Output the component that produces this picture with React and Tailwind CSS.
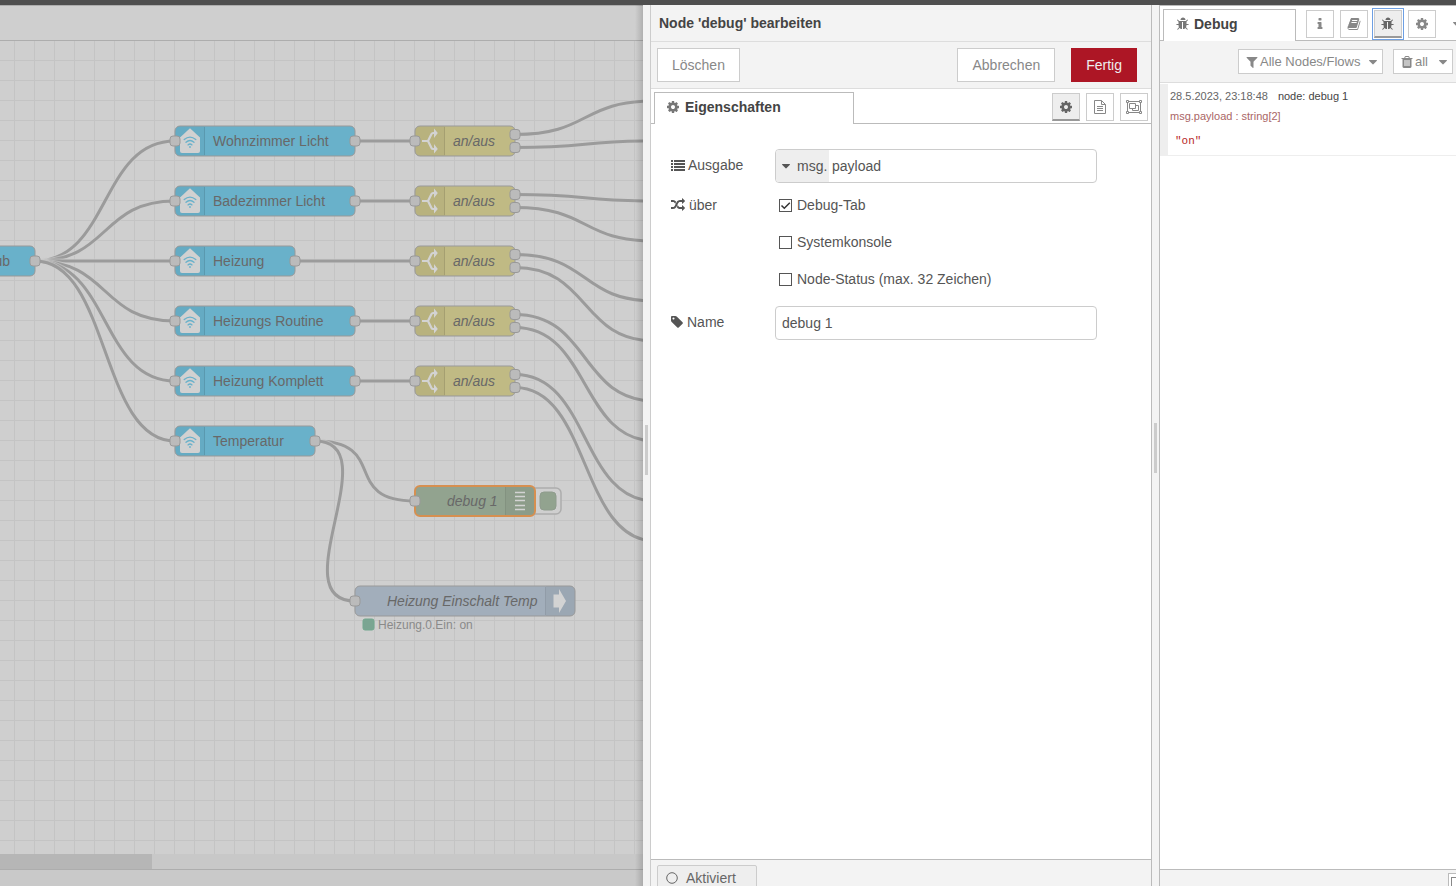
import React from 'react';

const ICONS = {
  cog: 'M1152 896q0-106-75-181t-181-75-181 75-75 181 75 181 181 75 181-75 75-181zm512-109v222q0 12-8 23t-20 13l-185 28q-19 54-39 91 35 50 107 138 10 12 10 25t-9 23q-27 37-99 108t-94 71q-12 0-26-9l-138-108q-44 23-91 38-16 136-29 186-7 28-36 28h-222q-14 0-24.5-8.5t-11.5-21.5l-28-184q-49-16-90-37l-141 107q-10 9-25 9-14 0-25-11-126-114-165-168-7-10-7-23 0-12 8-23 15-21 51-66.5t54-70.5q-27-50-41-99l-183-27q-13-2-21-12.5t-8-23.5v-222q0-12 8-23t19-13l186-28q14-46 39-92-40-57-107-138-10-12-10-24 0-10 9-23 26-36 98.500-107.500t94.500-71.500q13 0 26 10l138 107q44-23 91-38 16-136 29-186 7-28 36-28h222q14 0 24.500 8.500t11.500 21.500l28 184q49 16 90 37l142-107q9-9 24-9 13 0 25 10 129 119 165 170 7 8 7 22 0 12-8 23-15 21-51 66.500t-54 70.500q26 50 41 98l183 28q13 2 21 12.500t8 23.500z',
  bug: 'M1632 960q0 26-19 45t-45 19h-224q0 171-67 290l208 209q19 19 19 45t-19 45q-18 19-45 19t-45-19l-198-197q-5 5-15 13t-42 28.500-65 36.500-82 29-97 13v-896h-128v896q-51 0-101.500-13.500t-87-33-66-39-43.500-32.500l-15-14-183 207q-20 21-48 21-24 0-43-16-19-18-20.500-44.500t15.500-46.500l202-227q-58-114-58-274h-224q-26 0-45-19t-19-45 19-45 45-19h224v-294l-173-173q-19-19-19-45t19-45 45-19 45 19l173 173h844l173-173q19-19 45-19t45 19 19 45-19 45l-173 173v294h224q26 0 45 19t19 45zm-416-576h-640q0-133 93.500-226.500t226.500-93.500 226.500 93.500 93.500 226.500z',
  info: 'M1216 1344v128q0 26-19 45t-45 19h-512q-26 0-45-19t-19-45v-128q0-26 19-45t45-19h64v-384h-64q-26 0-45-19t-19-45v-128q0-26 19-45t45-19h384q26 0 45 19t19 45v576h64q26 0 45 19t19 45zm-128-1152v192q0 26-19 45t-45 19h-256q-26 0-45-19t-19-45v-192q0-26 19-45t45-19h256q26 0 45 19t19 45z',
  book: 'M1703 478q40 57 18 129l-275 906q-19 64-76.500 107.500t-122.500 43.500h-923q-77 0-148.500-53.500t-99.500-131.500q-24-67-2-127 0-4 3-27t4-37q1-8-3-21.500t-3-19.500q2-11 8-21t16.500-23.500 16.500-23.500q23-38 45-91.500t30-91.500q3-10 .5-30t-.5-28q3-11 17-28t17-23q21-36 42-92t25-90q1-9-2.500-32t.5-28q4-13 22-30.500t22-22.500q19-26 42.500-84.500t27.500-96.500q1-8-3-25.500t-2-26.500q2-8 9-18t18-23 17-21q8-12 16.500-30.500t15-35 16-36 19.500-32 26.500-23.500 36-11.500 47.500 5.500l-1 3q38-9 51-9h761q74 0 114 56t18 130l-274 906q-36 119-71.500 153.500t-128.500 34.500h-869q-27 0-38 15-11 16-1 43 24 70 144 70h923q29 0 56-15.500t35-41.500l300-987q7-22 5-57 38 15 59 43zm-1064 2q-4 13 2 22.500t20 9.500h608q13 0 25.500-9.500t16.500-22.500l21-64q4-13-2-22.500t-20-9.500h-608q-13 0-25.500 9.500t-16.500 22.500zm-83 256q-4 13 2 22.500t20 9.500h608q13 0 25.500-9.500t16.500-22.500l21-64q4-13-2-22.500t-20-9.500h-608q-13 0-25.500 9.500t-16.500 22.500z',
  filter: 'M1595 295q17 41-14 70l-493 493v742q0 42-39 59-13 5-25 5-27 0-45-19l-256-256q-19-19-19-45v-486l-493-493q-31-29-14-70 17-39 59-39h1280q42 0 59 39z',
  trash: 'M704 1376v-704q0-14-9-23t-23-9h-64q-14 0-23 9t-9 23v704q0 14 9 23t23 9h64q14 0 23-9t9-23zm256 0v-704q0-14-9-23t-23-9h-64q-14 0-23 9t-9 23v704q0 14 9 23t23 9h64q14 0 23-9t9-23zm256 0v-704q0-14-9-23t-23-9h-64q-14 0-23 9t-9 23v704q0 14 9 23t23 9h64q14 0 23-9t9-23zm-544-992h448l-48-117q-7-9-17-11h-317q-10 2-17 11zm928 32v64q0 14-9 23t-23 9h-96v948q0 83-47 143.500t-113 60.500h-832q-66 0-113-58.500t-47-141.500v-952h-96q-14 0-23-9t-9-23v-64q0-14 9-23t23-9h309l70-167q15-37 54-63t79-26h320q40 0 79 26t54 63l70 167h309q14 0 23 9t9 23z',
  caret: 'M1408 704q0 26-19 45l-448 448q-19 19-45 19t-45-19l-448-448q-19-19-19-45t19-45 45-19h896q26 0 45 19t19 45z',
  list: 'M0 256h256v256H0zM0 640h256v256H0zM0 1024h256v256H0zM0 1408h256v256H0zM384 256h1408v256H384zM384 640h1408v256H384zM384 1024h1408v256H384zM384 1408h1408v256H384z',
  random: 'M666 481q-60 92-137 273-22-45-37-72.500t-40.500-63.500-51-56.500-63-35-81.500-14.500h-224q-14 0-23-9t-9-23v-192q0-14 9-23t23-9h224q250 0 410 225zm1126 799q0 14-9 23l-320 320q-9 9-23 9-13 0-22.500-9.500t-9.500-22.500v-192q-32 0-85 .5t-81 1-73-1-71-5-64-10.500-63-18.500-58-28.500-59-40-55-53.500-56-69.500q59-93 136-273 22 45 37 72.500t40.500 63.500 51 56.500 63 35 81.500 14.500h256v-192q0-14 9-23t23-9q12 0 24 10l319 319q9 9 9 23zm0-896q0 14-9 23l-320 320q-9 9-23 9-13 0-22.500-9.500t-9.500-22.500v-192h-256q-48 0-87 15t-69 45-51 61.500-45 77.500q-32 62-78 171-29 66-49.500 111t-54 105-64 100-74 83-90 68.500-106.500 42-128 16.500h-224q-14 0-23-9t-9-23v-192q0-14 9-23t23-9h224q48 0 87-15t69-45 51-61.500 45-77.500q32-62 78-171 29-66 49.500-111t54-105 64-100 74-83 90-68.500 106.500-42 128-16.500h256v-192q0-14 9-23t23-9q12 0 24 10l319 319q9 9 9 23z',
  tag: 'M448 448q0-53-37.500-90.500t-90.500-37.500-90.500 37.500-37.500 90.500 37.500 90.500 90.500 37.500 90.500-37.500 37.500-90.500zm1067 576q0 53-37 90l-491 492q-39 37-91 37-53 0-90-37l-715-716q-38-37-64.500-101t-26.500-117v-416q0-52 38-90t90-38h416q53 0 117 26.500t102 64.500l715 714q37 39 37 91z',
};

function Icon({ name, className }) {
  return (
    <svg viewBox="0 0 1792 1792" className={'shrink-0 ' + className} fill="currentColor" aria-hidden="true">
      <path d={ICONS[name]} />
    </svg>
  );
}

function FileIcon() {
  return (
    <svg viewBox="0 0 14 16" className="h-4 w-[14px]" fill="none" stroke="currentColor" aria-hidden="true">
      <path d="M1.500 1.500h7l4 4v9h-11zM8.500 1.500v4h4M4 7.500h6M4 9.500h6M4 11.500h6" />
    </svg>
  );
}

function GroupIcon() {
  return (
    <svg viewBox="0 0 16 14" className="h-[14px] w-4" fill="none" stroke="currentColor" aria-hidden="true">
      <path d="M2.500 1.500h11M2.500 12.500h11M1.500 2.500v9M14.500 2.500v9" />
      <path d="M.5.500h2v2h-2zM13.500.500h2v2h-2zM.5 11.500h2v2h-2zM13.500 11.500h2v2h-2z" />
      <path d="M3.500 3.500h6v5h-6zM9.500 5.500h3v5h-6v-2" />
    </svg>
  );
}

const BLUE = '#69b1ca';
const KHAKI = '#c0ba84';

const wires = [
  ...[141, 201, 261, 321, 381, 441].map((y) => [35, 261, 175, y]),
  ...[141, 201, 321, 381].map((y) => [355, y, 415, y]),
  [295, 261, 415, 261],
  [315, 441, 415, 501],
  [315, 441, 355, 601],
  ...[0, 1, 2, 3, 4].flatMap((i) => {
    const y = 141 + i * 60;
    const ends = [[101, 141], [201, 241], [301, 341], [401, 441], [501, 541]][i];
    return [[515, y - 6.5, 655, ends[0]], [515, y + 6.5, 655, ends[1]]];
  }),
];

const sensors = [
  { y: 126, w: 180, label: 'Wohnzimmer Licht' },
  { y: 186, w: 180, label: 'Badezimmer Licht' },
  { y: 246, w: 120, label: 'Heizung' },
  { y: 306, w: 180, label: 'Heizungs Routine' },
  { y: 366, w: 180, label: 'Heizung Komplett' },
  { y: 426, w: 140, label: 'Temperatur' },
];

function Wire({ from }) {
  const [x1, y1, x2, y2] = from;
  const len = Math.hypot(x2 - x1, y2 - y1);
  const k = len < 100 ? 0.75 * len : 75;
  const d = `M${x1} ${y1}C${x1 + k} ${y1} ${x2 - k} ${y2} ${x2} ${y2}`;
  return (
    <g fill="none">
      <path d={d} stroke="#cfcfcf" strokeWidth="5" opacity="0.6" />
      <path d={d} stroke="#9b9b9b" strokeWidth="3" />
    </g>
  );
}

function Port({ x, y }) {
  return <rect x={x - 5} y={y - 5} width="10" height="10" rx="3" fill="#bbbbbb" stroke="#999999" />;
}

function Body({ x, y, w, fill, stroke = '#999999', strokeWidth = 1 }) {
  return <rect x={x} y={y} width={w} height="30" rx="5" fill={fill} stroke={stroke} strokeWidth={strokeWidth} />;
}

function Label({ x, y, italic, children }) {
  return (
    <text x={x} y={y} fill="#686868" className={italic ? 'text-[14px] italic' : 'text-[14px]'}>
      {children}
    </text>
  );
}

function Sensor({ y, w, label }) {
  return (
    <g>
      <Body x={175} y={y} w={w} fill={BLUE} />
      <path d={`M180 ${y + 0.5}h25v29h-25a4.500 4.500 0 0 1 -4.500 -4.500v-20a4.500 4.500 0 0 1 4.500 -4.500z`} fill="#000" opacity="0.03" />
      <path d={`M204.500 ${y + 1}v28`} stroke="#000" strokeOpacity="0.1" />
      <g transform={`translate(180 ${y})`}>
        <path d="M10 2.200L20 11.500V25a2 2 0 0 1 -2 2H2a2 2 0 0 1 -2 -2V11.500z" fill="#d1d1d1" />
        <g fill="none" stroke={BLUE} strokeWidth="1.300" strokeLinecap="round">
          <path d="M4.200 13.600q5.800-5 11.600 0M6 16.300q4-3.600 8 0M8 18.900q2-1.800 4 0" />
        </g>
        <circle cx="10" cy="21" r="0.900" fill={BLUE} />
      </g>
      <Label x={213} y={y + 20}>{label}</Label>
      <Port x={175} y={y + 15} />
      <Port x={175 + w} y={y + 15} />
    </g>
  );
}

function Switch({ y }) {
  return (
    <g>
      <Body x={415} y={y} w={100} fill={KHAKI} />
      <path d={`M420 ${y + 0.5}h25v29h-25a4.500 4.500 0 0 1 -4.500 -4.500v-20a4.500 4.500 0 0 1 4.500 -4.500z`} fill="#000" opacity="0.04" />
      <path d={`M444.500 ${y + 1}v28`} stroke="#000" strokeOpacity="0.1" />
      <g transform={`translate(415 ${y})`}>
        <path d="M7 15h6M12.500 16L16.500 8q.5-1 1.500-1h2M12.500 14L16.500 22q.5 1 1.500 1h2" fill="none" stroke="#d3d3d3" strokeWidth="2.200" />
        <path d="M19 2.500L22.800 7L19 12zM19 18L22.800 23L19 27.500z" fill="#d3d3d3" />
      </g>
      <Label x={453} y={y + 20} italic>an/aus</Label>
      <Port x={415} y={y + 15} />
      <Port x={515} y={y + 8.5} />
      <Port x={515} y={y + 21.5} />
    </g>
  );
}

function Flow() {
  return (
    <svg className="absolute inset-0 size-full" role="img" aria-label="Flow">
      <defs>
        <pattern id="grid" x="14" y="0" width="20" height="20" patternUnits="userSpaceOnUse">
          <path d="M0 0h20v1H1v19H0z" fill="#c4c4c4" />
        </pattern>
      </defs>
      <g transform="translate(0 -41)">
        <rect x="0" y="41" width="100%" height="100%" fill="url(#grid)" />
        {wires.map((w) => <Wire key={w.join()} from={w} />)}

        <Body x={-65} y={246} w={100} fill={BLUE} />
        <text x="10" y="266" textAnchor="end" fill="#686868" className="text-[14px]">ub</text>
        <Port x={35} y={261} />

        {sensors.map((s) => <Sensor key={s.label} {...s} />)}
        {[126, 186, 246, 306, 366].map((y) => <Switch key={y} y={y} />)}

        <rect x="529" y="488" width="32" height="26" rx="5" fill="#cfcfcf" stroke="#adadad" strokeWidth="1.500" />
        <rect x="540" y="492" width="16" height="18" rx="4" fill="#92a38f" stroke="#8f9c8d" />
        <Body x={415} y={486} w={120} fill="#92a38f" stroke="#d68f50" strokeWidth={2} />
        <path d="M506 487h24a4 4 0 0 1 4 4v20a4 4 0 0 1 -4 4h-24z" fill="#000" opacity="0.04" />
        <path d="M505.500 487v28" stroke="#000" strokeOpacity="0.1" />
        <path d="M515 492.500h10M515 496.500h10M515 500.500h10M515 505.500h10M515 509.500h10" stroke="#d3d3d3" strokeWidth="1.300" />
        <Label x={447} y={506} italic>debug 1</Label>
        <Port x={415} y={501} />

        <Body x={355} y={586} w={220} fill="#a2aebb" />
        <path d="M546 586.500h24a4.500 4.500 0 0 1 4.500 4.500v20a4.500 4.500 0 0 1 -4.500 4.500h-24z" fill="#000" opacity="0.04" />
        <path d="M545.500 587v28" stroke="#000" strokeOpacity="0.1" />
        <path d="M553.500 594.500h5.500v-5.500l7 12l-7 12v-5.500h-5.500z" fill="#d3d3d3" />
        <Label x={387} y={606} italic>Heizung Einschalt Temp</Label>
        <Port x={355} y={601} />
        <rect x="363" y="619" width="11" height="11" rx="2" fill="#7aa592" stroke="#73a88f" />
        <text x="378" y="629" fill="#8a8a8a" className="text-[12px]">Heizung.0.Ein: on</text>
      </g>
    </svg>
  );
}

function Separator({ grip }) {
  return (
    <div className={'flex w-[7px] shrink-0 flex-col items-center bg-[#f3f3f3] ' + grip}>
      <div className="h-[50px] w-[3px] bg-[#cccccc]" />
    </div>
  );
}

function SquareButton({ label, active, focused, children }) {
  const look = active ? 'border-b-2 border-b-[#999999] bg-[#eeeeee] text-[#666666]' : 'bg-white text-[#888888]';
  const ring = focused ? ' outline-1 outline-offset-1 outline-[#6d9fe3]' : '';
  return (
    <button type="button" aria-label={label} className={'flex size-7 shrink-0 items-center justify-center border border-[#cccccc] ' + look + ring}>
      {children}
    </button>
  );
}

function Check({ id, label, defaultChecked }) {
  return (
    <div className="flex h-[37px] items-center gap-[5px] pl-1">
      <span className="relative flex size-[13px]">
        <input id={id} type="checkbox" defaultChecked={defaultChecked} className="peer size-[13px] appearance-none border border-[#555555] bg-white" />
        <svg viewBox="0 0 13 13" className="pointer-events-none absolute inset-0 hidden size-[13px] peer-checked:block" fill="none" stroke="#333333" strokeWidth="1.500" aria-hidden="true">
          <path d="M2.500 6.500l2.800 2.800l5.500-5.500" />
        </svg>
      </span>
      <label htmlFor={id} className="pb-0.5">{label}</label>
    </div>
  );
}

export default function App() {
  return (
    <div className="flex h-screen flex-col overflow-hidden bg-[#4f4f4f] pt-[5px] font-['Liberation_Sans',Arial,sans-serif] text-[14px] leading-5 text-[#555555]">
      <div className="flex min-h-0 flex-1">
        <main className="relative flex min-w-0 flex-1 flex-col bg-[#cfcfcf]">
          <div className="h-9 shrink-0 border-y border-[#adadad]" />
          <div className="relative min-h-0 flex-1 overflow-hidden">
            <Flow />
          </div>
          <div className="h-[15px] shrink-0 bg-[#c8c8c8]">
            <div className="h-full w-[152px] bg-[#b6b6b6]" />
          </div>
          <div className="h-[17px] shrink-0 border-t border-[#adadad] bg-[#c9c9c9]" />
          <div className="absolute inset-y-0 right-0 w-2 bg-linear-to-r from-black/0 to-black/15" />
        </main>

        <Separator grip="pt-[420px]" />

        <section className="flex w-[502px] shrink-0 flex-col border-x border-l-[#cccccc] border-r-[#bbbbbb] bg-white">
          <h1 className="h-[37px] shrink-0 border-b border-[#dddddd] bg-[#f3f3f3] px-2 pt-2 font-bold text-[#444444]">Node 'debug' bearbeiten</h1>
          <div className="flex h-[47px] shrink-0 items-center gap-4 border-b border-[#dddddd] bg-[#f3f3f3] pl-1.5 pr-3.5">
            <button type="button" className="mr-auto h-[34px] border border-[#cccccc] bg-white px-3.5 text-[#888888]">Löschen</button>
            <button type="button" className="h-[34px] border border-[#cccccc] bg-white px-3.5 text-[#888888]">Abbrechen</button>
            <button type="button" className="h-[34px] border border-[#ad1625] bg-[#ad1625] px-3.5 text-[#eeeeee]">Fertig</button>
          </div>
          <div className="flex h-[35px] shrink-0 items-end border-b border-[#bbbbbb] pl-[3px] pr-[3px]">
            <div className="-mb-px flex h-8 w-[200px] items-center gap-[5px] border border-b-0 border-[#bbbbbb] bg-white pb-[3px] pl-[11px] font-bold text-[#444444]">
              <Icon name="cog" className="size-3.5 text-[#777777]" />
              Eigenschaften
            </div>
            <div className="mb-0.5 ml-auto flex gap-1.5">
              <SquareButton label="Eigenschaften" active><Icon name="cog" className="size-3.5" /></SquareButton>
              <SquareButton label="Beschreibung"><FileIcon /></SquareButton>
              <SquareButton label="Darstellung"><GroupIcon /></SquareButton>
            </div>
          </div>

          <form className="flex-1 px-5 pt-[25px]">
            <div className="flex h-[34px]">
              <label htmlFor="output" className="flex w-[104px] items-center gap-[3px] pb-0.5">
                <Icon name="list" className="size-3.5" />Ausgabe
              </label>
              <div className="flex w-[70%] overflow-hidden rounded border border-[#cccccc]">
                <button type="button" className="flex w-[53px] shrink-0 items-center gap-1 bg-[#eeeeee] pl-[3px]">
                  <Icon name="caret" className="size-3.5" />msg.
                </button>
                <input id="output" defaultValue="payload" className="min-w-0 flex-1 pl-[3px] outline-none" />
              </div>
            </div>
            <fieldset className="mt-1 flex">
              <div className="flex h-[37px] w-[104px] items-center gap-1 pb-0.5">
                <Icon name="random" className="size-3.5" />über
              </div>
              <div>
                <Check id="tab" label="Debug-Tab" defaultChecked />
                <Check id="console" label="Systemkonsole" />
                <Check id="status" label="Node-Status (max. 32 Zeichen)" />
              </div>
            </fieldset>
            <div className="mt-2 flex h-[34px]">
              <label htmlFor="name" className="flex w-[104px] items-center gap-0.5 pb-0.5">
                <Icon name="tag" className="size-3.5" />Name
              </label>
              <input id="name" defaultValue="debug 1" className="w-[70%] rounded border border-[#cccccc] px-1.5 outline-none" />
            </div>
          </form>

          <div className="h-[27px] shrink-0 overflow-hidden border-t border-[#bbbbbb] bg-[#f3f3f3] pl-1.5 pt-[5px]">
            <button type="button" className="flex h-[26px] w-[100px] items-center gap-2 rounded-xs border border-[#cccccc] bg-[#eeeeee] pl-2 text-[#666666]">
              <svg viewBox="0 0 12 12" className="size-3" fill="none" stroke="currentColor" aria-hidden="true"><circle cx="6" cy="6" r="5.300" /></svg>
              Aktiviert
            </button>
          </div>
        </section>

        <Separator grip="pt-[418px]" />

        <aside className="flex w-[297px] shrink-0 flex-col overflow-hidden border-l border-t border-[#bbbbbb] bg-white">
          <div className="flex h-[35px] shrink-0 items-end border-b border-[#bbbbbb] bg-white pl-[3px]">
            <div className="-mb-px flex h-8 w-[133px] shrink-0 items-center gap-1 border border-b-0 border-[#bbbbbb] bg-white pb-[3px] pl-3 font-bold text-[#444444]">
              <Icon name="bug" className="size-3.5 text-[#777777]" />
              Debug
            </div>
            <div className="mb-0.5 ml-2.5 flex gap-1.5">
              <SquareButton label="Information"><Icon name="info" className="size-3.5" /></SquareButton>
              <SquareButton label="Hilfe"><Icon name="book" className="size-3.5" /></SquareButton>
              <SquareButton label="Debug" active focused><Icon name="bug" className="size-3.5" /></SquareButton>
              <SquareButton label="Konfiguration"><Icon name="cog" className="size-3.5" /></SquareButton>
              <button type="button" aria-label="Mehr" className="flex size-7 shrink-0 items-center pl-2 text-[#888888]"><Icon name="caret" className="size-3.5" /></button>
            </div>
          </div>
          <div className="flex h-[42px] shrink-0 items-center justify-end gap-2.5 border-b border-[#dddddd] bg-[#f3f3f3] pr-[3px] text-[13px] text-[#888888]">
            <button type="button" className="flex h-[25px] w-[145px] items-center whitespace-nowrap border border-[#cccccc] bg-white pl-1.5">
              <Icon name="filter" className="mr-px size-3.5" />Alle Nodes/Flows
              <Icon name="caret" className="ml-auto mr-0.5 size-3.5" />
            </button>
            <button type="button" className="flex h-[25px] w-[60px] items-center border border-[#cccccc] bg-white pl-1.5">
              <Icon name="trash" className="mr-px size-3.5" />all
              <Icon name="caret" className="ml-auto mr-0.5 size-3.5" />
            </button>
          </div>
          <div className="mt-px border-b border-l-8 border-[#eeeeee] pb-1 pl-0.5 pt-0.5 text-[11px] text-[#666666]">
            <div className="flex gap-2.5">
              <span>28.5.2023, 23:18:48</span>
              <a href="#debug-1" className="text-[#444444]">node: debug 1</a>
            </div>
            <div className="text-[#aa6666]">msg.payload : string[2]</div>
            <div className="pl-[5px] pt-[5px] font-['Liberation_Mono',monospace] text-[#b72828]">"on"</div>
          </div>
          <div className="mt-auto flex h-[17px] shrink-0 justify-end overflow-hidden border-t border-[#bbbbbb] bg-[#f3f3f3] pt-[3px]">
            <button type="button" aria-label="Fenster" className="h-6 w-2 border border-r-0 border-[#bbbbbb] bg-white pl-0.5 pt-[3px]">
              <span className="block h-full w-full border-b-8 border-l border-t border-[#888888]" />
            </button>
          </div>
        </aside>
      </div>
    </div>
  );
}
